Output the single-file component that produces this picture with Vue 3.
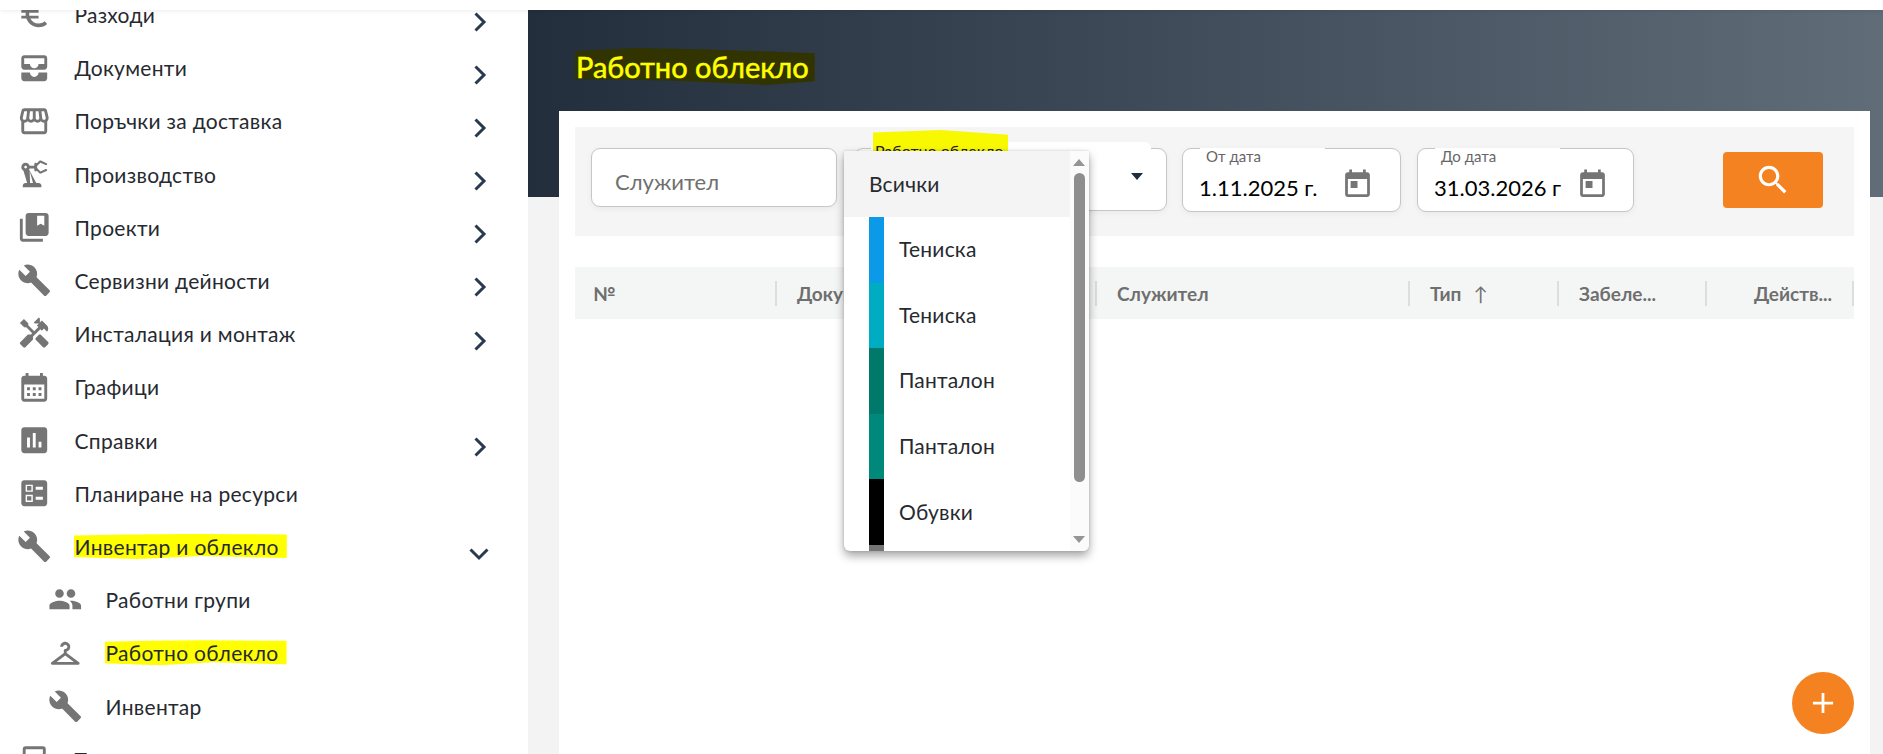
<script setup>
const paths = {
  euro: 'M15 18.5c-2.51 0-4.68-1.42-5.76-3.5H15v-2H8.58c-.05-.33-.08-.66-.08-1s.03-.67.08-1H15V9H9.24C10.32 6.92 12.5 5.5 15 5.5c1.61 0 3.09.59 4.23 1.57L21 5.3C19.41 3.87 17.3 3 15 3c-3.92 0-7.24 2.51-8.48 6H3v2h3.06c-.04.33-.06.66-.06 1 0 .34.02.67.06 1H3v2h3.52c1.24 3.49 4.56 6 8.48 6 2.31 0 4.41-.87 6-2.3l-1.78-1.77c-1.13.98-2.6 1.57-4.22 1.57z',
  inbox: 'M19 3H5c-1.1 0-2 .9-2 2v6c0 1.1.9 2 2 2h14c1.1 0 2-.9 2-2V5c0-1.1-.9-2-2-2zm0 6h-4c0 1.62-1.38 3-3 3s-3-1.38-3-3H5V5h14v4zm-4 6h6v4c0 1.1-.9 2-2 2H5c-1.1 0-2-.9-2-2v-4h6c0 1.66 1.34 3 3 3s3-1.34 3-3z',
  store: 'M21.9 8.89l-1.05-4.37c-.22-.9-1-1.52-1.91-1.52H5.05c-.9 0-1.69.63-1.9 1.52L2.1 8.89c-.24 1.02-.02 2.06.62 2.88.08.11.19.19.28.29V19c0 1.1.9 2 2 2h14c1.1 0 2-.9 2-2v-6.94c.09-.09.2-.18.28-.28.64-.82.87-1.87.62-2.89zm-2.99-3.9l1.05 4.37c.1.42.01.84-.25 1.17-.14.18-.44.47-.94.47-.61 0-1.14-.49-1.21-1.14L16.98 5l1.93-.01zM13 5h1.96l.54 4.52c.05.39-.07.78-.33 1.07-.22.26-.54.41-.95.41-.67 0-1.22-.59-1.22-1.31V5zM8.49 9.52L9.04 5H11v4.69c0 .72-.55 1.31-1.29 1.31-.34 0-.65-.15-.89-.41-.25-.29-.37-.68-.33-1.07zm-4.45-.16L5.05 5h1.97l-.58 4.86c-.08.65-.6 1.14-1.21 1.14-.49 0-.8-.29-.93-.47-.27-.32-.36-.75-.26-1.17zM5 19v-6.03c.08.01.15.03.23.03.87 0 1.66-.36 2.24-.95.6.6 1.4.95 2.31.95.87 0 1.65-.36 2.23-.93.59.57 1.39.93 2.29.93.84 0 1.64-.35 2.24-.95.58.59 1.37.95 2.24.95.08 0 .15-.02.23-.03V19H5z',
  robot: 'M19.93 8.35l-3.6 1.68L14 7.7V6.3l2.33-2.33 3.6 1.68c.38.18.82.01 1-.36.18-.38.01-.82-.36-1l-3.92-1.83c-.38-.18-.83-.1-1.13.2L13.78 4.4c-.18-.24-.46-.4-.78-.4-.55 0-1 .45-1 1v1H8.82C8.4 4.84 7.3 4 6 4 4.34 4 3 5.34 3 7c0 1.1.6 2.05 1.48 2.58L7.08 18H6c-1.1 0-2 .9-2 2v1h13v-1c0-1.1-.9-2-2-2h-1.62L8.41 8.77c.17-.24.31-.49.41-.77H12v1c0 .55.45 1 1 1 .32 0 .6-.16.78-.4l1.74 1.74c.3.3.75.38 1.13.2l3.92-1.83c.38-.18.54-.62.36-1-.18-.37-.62-.54-1-.36zM6 8c-.55 0-1-.45-1-1s.45-1 1-1 1 .45 1 1-.45 1-1 1zm5.11 10H9.08l-.25-8.45L11.11 18z',
  books: 'M4 6H2v14c0 1.1.9 2 2 2h14v-2H4V6zm16-4H8c-1.1 0-2 .9-2 2v12c0 1.1.9 2 2 2h12c1.1 0 2-.9 2-2V4c0-1.1-.9-2-2-2zm-1 9l-2.5-1.500L14 11V4h5v7z',
  build: 'M22.7 19l-9.1-9.1c.9-2.3.4-5-1.5-6.9-2-2-5-2.4-7.4-1.3L9 6 6 9 1.6 4.7C.4 7.1.9 10.1 2.9 12.1c1.9 1.9 4.6 2.4 6.9 1.5l9.1 9.1c.4.4 1 .4 1.4 0l2.3-2.3c.5-.4.5-1.1.1-1.4z',
  handy: 'M21.67 18.17l-5.3-5.3h-.99l-2.54 2.54v.99l5.3 5.3c.39.39 1.02.39 1.41 0l2.12-2.12c.39-.38.39-1.02 0-1.41zM17.34 10.19l1.41-1.41 2.12 2.12c1.17-1.17 1.17-3.07 0-4.24l-3.54-3.54-1.41 1.41V1.71l-.7-.71-3.54 3.54.71.71h2.83l-1.41 1.41 1.06 1.06-2.89 2.89-4.13-4.13V5.06L4.83 2.04 2 4.87 5.03 7.9h1.41l4.13 4.13-.85.85H7.6l-5.3 5.3c-.39.39-.39 1.02 0 1.41l2.12 2.12c.39.39 1.02.39 1.41 0l5.3-5.3v-2.12l5.15-5.15 1.06 1.05z',
  calendar: 'M19 4h-1V2h-2v2H8V2H6v2H5c-1.1 0-2 .9-2 2v14c0 1.1.9 2 2 2h14c1.1 0 2-.9 2-2V6c0-1.1-.9-2-2-2zm0 16H5V10h14v10zM9 14H7v-2h2v2zm4 0h-2v-2h2v2zm4 0h-2v-2h2v2zm-8 4H7v-2h2v2zm4 0h-2v-2h2v2zm4 0h-2v-2h2v2z',
  chart: 'M19 3H5c-1.1 0-2 .9-2 2v14c0 1.1.9 2 2 2h14c1.1 0 2-.9 2-2V5c0-1.1-.9-2-2-2zM9 17H7v-7h2v7zm4 0h-2V7h2v10zm4 0h-2v-4h2v4z',
  ballot: 'M13 9.5h5v-2h-5v2zm0 7h5v-2h-5v2zm6 4.5H5c-1.1 0-2-.9-2-2V5c0-1.1.9-2 2-2h14c1.1 0 2 .9 2 2v14c0 1.1-.9 2-2 2zM6 11h5V6H6v5zm1-4h3v3H7V7zM6 18h5v-5H6v5zm1-4h3v3H7v-3z',
  people: 'M16 11c1.66 0 2.99-1.34 2.99-3S17.66 5 16 5c-1.66 0-3 1.34-3 3s1.34 3 3 3zm-8 0c1.66 0 2.99-1.34 2.99-3S9.66 5 8 5C6.34 5 5 6.34 5 8s1.34 3 3 3zm0 2c-2.33 0-7 1.17-7 3.5V19h14v-2.5c0-2.33-4.67-3.5-7-3.5zm8 0c-.29 0-.62.02-.97.05 1.16.84 1.97 1.97 1.97 3.45V19h6v-2.5c0-2.33-4.67-3.5-7-3.5z',
  hanger: 'M21.6 18.2L13 11.75v-.91c1.65-.49 2.8-2.17 2.43-4.05-.26-1.31-1.3-2.4-2.61-2.7C10.54 3.57 8.5 5.3 8.5 7.5h2c0-.83.67-1.5 1.5-1.5s1.5.67 1.5 1.5c0 .84-.69 1.52-1.53 1.5-.54-.01-.97.45-.97.99v1.76L2.4 18.2c-.77.58-.36 1.8.6 1.8h18c.96 0 1.37-1.22.6-1.8zM6 18l6-4.5 6 4.5H6z',
  box: 'M6 3h12a2 2 0 0 1 2 2v16h-2V5H6v16H4V5a2 2 0 0 1 2-2z',
  event: 'M7 9.5h5v5H7zM16 1v2H8V1H6v2H5c-1.11 0-1.99.9-1.99 2L3 19c0 1.1.89 2 2 2h14c1.1 0 2-.9 2-2V5c0-1.1-.9-2-2-2h-1V1h-2zm3 18H5V8h14v11z',
  search: 'M15.5 14h-.79l-.28-.27C15.41 12.59 16 11.11 16 9.5 16 5.91 13.09 3 9.5 3S3 5.91 3 9.5 5.91 16 9.5 16c1.61 0 3.09-.59 4.23-1.57l.27.28v.79l5 4.99L20.49 19l-4.99-5zm-6 0C7.01 14 5 11.99 5 9.5S7.01 5 9.5 5 14 7.01 14 9.5 11.99 14 9.5 14z'
}

const menu = [
  { label: 'Разходи', icon: 'euro', arrow: 'right' },
  { label: 'Документи', icon: 'inbox', arrow: 'right' },
  { label: 'Поръчки за доставка', icon: 'store', arrow: 'right' },
  { label: 'Производство', icon: 'robot', arrow: 'right' },
  { label: 'Проекти', icon: 'books', arrow: 'right' },
  { label: 'Сервизни дейности', icon: 'build', arrow: 'right' },
  { label: 'Инсталация и монтаж', icon: 'handy', arrow: 'right' },
  { label: 'Графици', icon: 'calendar' },
  { label: 'Справки', icon: 'chart', arrow: 'right' },
  { label: 'Планиране на ресурси', icon: 'ballot' },
  { label: 'Инвентар и облекло', icon: 'build', arrow: 'down', mark: true },
  { label: 'Работни групи', icon: 'people', sub: true },
  { label: 'Работно облекло', icon: 'hanger', sub: true, mark: true },
  { label: 'Инвентар', icon: 'build', sub: true },
  { label: 'Транспорт', icon: 'box' }
]

const options = [
  { label: 'Тениска', color: '#0c9ae8' },
  { label: 'Тениска', color: '#00acc1' },
  { label: 'Панталон', color: '#00796b' },
  { label: 'Панталон', color: '#00897b' },
  { label: 'Обувки', color: '#000000' },
  { label: 'Друго', color: '#757575' }
]

const dates = [
  { label: 'От дата', value: '1.11.2025 г.' },
  { label: 'До дата', value: '31.03.2026 г' }
]

const columns = [
  { label: '№', w: 202 },
  { label: 'Документ', w: 320 },
  { label: 'Служител', w: 313 },
  { label: 'Тип', w: 149, sort: true },
  { label: 'Забеле...', w: 148 },
  { label: 'Действ...', w: 147, right: true }
]
const gridCols = columns.map(c => c.w + 'px').join(' ')
</script>

<template>
  <div class="app">
    <div class="topbar"></div>
    <div class="body">
      <aside class="sidebar">
        <ul class="menu">
          <li v-for="item in menu" :key="item.label + item.icon" class="row" :class="{ sub: item.sub }">
            <svg class="icon" viewBox="0 0 24 24"><path :d="paths[item.icon]" /></svg>
            <span class="label" :class="{ mark: item.mark }">{{ item.label }}</span>
            <svg v-if="item.arrow === 'right'" class="chev" viewBox="0 0 24 24"><path d="M8.5 3.5 17 12l-8.5 8.500" /></svg>
            <svg v-if="item.arrow === 'down'" class="chev" viewBox="0 0 24 24"><path d="M3.5 8.5 12 17l8.500-8.500" /></svg>
          </li>
        </ul>
      </aside>

      <main class="main">
        <header class="hero">
          <h1 class="title">Работно облекло</h1>
        </header>

        <section class="card">
          <div class="filters">
            <div class="field employee">Служител</div>

            <div class="field select">
              <div class="notch">
                <span class="hl"></span>
                <span class="notch-text">Работно облекло</span>
              </div>
              <span class="caret"></span>
              <div class="dropdown">
                <div class="options">
                  <div class="option all">Всички</div>
                  <div v-for="(o, i) in options" :key="i" class="option">
                    <span class="swatch" :style="{ background: o.color }"></span>
                    <span class="option-text">{{ o.label }}</span>
                  </div>
                </div>
                <div class="track">
                  <span class="arrow up"></span>
                  <span class="thumb"></span>
                  <span class="arrow dn"></span>
                </div>
              </div>
            </div>

            <div v-for="d in dates" :key="d.label" class="field date">
              <div class="date-notch">{{ d.label }}</div>
              <span class="value">{{ d.value }}</span>
              <svg class="event" viewBox="0 0 24 24"><path :d="paths.event" /></svg>
            </div>

            <button class="search" type="button">
              <svg viewBox="0 0 24 24"><path :d="paths.search" /></svg>
            </button>
          </div>

          <div class="thead" :style="{ gridTemplateColumns: gridCols }">
            <div v-for="c in columns" :key="c.label" class="th" :class="{ right: c.right }">
              <span>{{ c.label }}</span>
              <span v-if="c.sort" class="sort">↑</span>
            </div>
          </div>
        </section>

        <button class="fab" type="button">
          <svg viewBox="0 0 24 24"><path d="M10.5 1h3v9.500H23v3h-9.500V23h-3v-9.500H1v-3h9.500z" /></svg>
        </button>
      </main>
    </div>
  </div>
</template>

<style>
html, body { margin: 0; height: 100%; overflow: hidden; background: #fff; }
</style>

<style scoped>
.app {
  width: 1883px;
  height: 754px;
  display: flex;
  flex-direction: column;
  overflow: hidden;
  font-family: Lato, "Noto Sans", sans-serif;
  color: #262a30;
}
.topbar {
  height: 10px;
  flex: none;
  background: #fff;
  box-shadow: 0 1px 4px rgba(0, 0, 0, .08);
  position: relative;
  z-index: 3;
}
.body { flex: 1; display: flex; min-height: 0; }
.sidebar {
  width: 528px;
  flex: none;
  overflow: hidden;
  background: #fff;
}
.menu { list-style: none; margin: -22px 0 0; padding: 0; }
.row {
  height: 53.2px;
  display: flex;
  align-items: center;
  padding-left: 17px;
  position: relative;
}
.row.sub { padding-left: 48px; }
.icon { width: 34.500px; height: 34.500px; flex: none; fill: #757575; }
.label {
  margin-left: 23px;
  font-size: 21px;
  line-height: 25px;
  letter-spacing: .3px;
  white-space: nowrap;
}
.mark {
  background: #ffff00;
  padding: 0 8px 0 1px;
  margin-left: 22px;
  clip-path: polygon(0 6%, 25% 2%, 55% 0, 100% 2%, 100% 96%, 60% 88%, 30% 100%, 0 92%);
}
.chev {
  position: absolute;
  left: 467px;
  top: 21.500px;
  width: 24px;
  height: 24px;
  fill: none;
  stroke: #2a3a4e;
  stroke-width: 3;
}
.main {
  flex: 1;
  min-width: 0;
  display: flex;
  flex-direction: column;
  position: relative;
  background: #f3f3f3;
}
.hero {
  height: 187px;
  flex: none;
  box-sizing: border-box;
  padding: 38px 0 0 47px;
  background: linear-gradient(90deg, #222e3c, #606c78);
}
.title {
  margin: 0;
  display: inline-block;
  font-size: 29px;
  line-height: 37px;
  font-weight: 400;
  -webkit-text-stroke: .5px #ffff00;
  color: #ffff00;
  background: #313400;
  padding: 0 6px 0 1px;
  clip-path: polygon(0 8%, 25% 0, 55% 4%, 100% 14%, 100% 90%, 80% 100%, 40% 88%, 0 84%);
}
.card {
  flex: 1;
  margin: -86px 13px 0 31px;
  padding: 16px;
  background: #fff;
  position: relative;
}
.filters {
  height: 109px;
  box-sizing: border-box;
  padding: 21px 0 0 16px;
  display: flex;
  align-items: flex-start;
  background: #f5f5f5;
}
.field {
  position: relative;
  box-sizing: border-box;
  background: #fff;
  border: 1px solid #c6c6c6;
  border-radius: 9px;
  box-shadow: 0 2px 6px rgba(0, 0, 0, .05);
}
.employee {
  width: 246px;
  height: 59px;
  margin-right: 17px;
  padding: 20px 0 0 23px;
  font-size: 22px;
  line-height: 26px;
  color: #6f6f6f;
}
.select { width: 313px; height: 63px; margin-right: 15px; }
.notch {
  position: absolute;
  left: 16px;
  top: -7px;
  width: 280px;
  height: 24px;
  background: #fff;
  border-radius: 6px;
}
.hl {
  position: absolute;
  left: 2px;
  top: -12px;
  width: 135px;
  height: 26px;
  background: #f8f800;
  clip-path: polygon(0 10%, 50% 0, 100% 18%, 100% 100%, 60% 100%, 0 94%);
}
.notch-text {
  position: absolute;
  left: 4px;
  top: 0;
  font-size: 16px;
  line-height: 18px;
  color: #222;
  white-space: nowrap;
}
.caret {
  position: absolute;
  left: 276px;
  top: 24px;
  width: 0;
  height: 0;
  border-left: 6.500px solid transparent;
  border-right: 6.500px solid transparent;
  border-top: 7px solid #1f2d3d;
}
.dropdown {
  position: absolute;
  left: -11px;
  top: 2px;
  width: 245px;
  height: 400px;
  display: flex;
  overflow: hidden;
  background: #fff;
  border-radius: 0 0 6px 6px;
  box-shadow: 0 5px 10px rgba(0, 0, 0, .35), 0 0 3px rgba(0, 0, 0, .15);
  z-index: 2;
}
.options { flex: 1; min-width: 0; }
.option {
  height: 65.6px;
  display: flex;
  align-items: center;
  padding-left: 25px;
  font-size: 21px;
  letter-spacing: .2px;
}
.option.all { background: #f4f4f4; height: 66px; padding-bottom: 2px; box-sizing: border-box; }
.option-text { margin-top: -2px; }
.swatch { width: 15px; height: 100%; margin-right: 15px; flex: none; }
.track {
  width: 19px;
  flex: none;
  background: #fbfbfb;
  position: relative;
  display: flex;
  flex-direction: column;
  align-items: center;
}
.thumb {
  position: absolute;
  left: 4px;
  top: 22px;
  width: 11px;
  height: 309px;
  border-radius: 6px;
  background: #8e8e8e;
}
.arrow {
  position: absolute;
  left: 3px;
  width: 0;
  height: 0;
  border-left: 6.500px solid transparent;
  border-right: 6.500px solid transparent;
}
.arrow.up { top: 8px; border-bottom: 7px solid #959595; }
.arrow.dn { top: 385px; border-top: 7px solid #959595; }
.date { height: 64px; }
.date:nth-of-type(3) { width: 219px; margin-right: 16px; }
.date:nth-of-type(4) { width: 217px; }
.date-notch {
  position: absolute;
  left: 17px;
  top: -1px;
  width: 125px;
  height: 23px;
  padding-left: 6px;
  box-sizing: border-box;
  background: #fff;
  border-radius: 0 0 6px 6px;
  font-size: 15px;
  line-height: 16px;
  color: #666;
}
.value {
  position: absolute;
  left: 16px;
  top: 26px;
  font-size: 22px;
  line-height: 26px;
  color: #000;
  white-space: nowrap;
}
.event { position: absolute; left: 158px; top: 19px; width: 33px; height: 33px; fill: #757575; }
.search {
  margin: 4px 0 0 89px;
  width: 100px;
  height: 56px;
  border: 0;
  border-radius: 4px;
  background: #f58220;
  display: flex;
  align-items: center;
  justify-content: center;
  padding: 0;
}
.search svg { width: 38px; height: 38px; fill: #fff; }
.thead {
  margin-top: 31px;
  height: 52px;
  display: grid;
  align-items: center;
  background: #f4f6f5;
}
.th {
  height: 25px;
  display: flex;
  align-items: center;
  box-sizing: border-box;
  padding-left: 20px;
  border-right: 2px solid #dcdedd;
  font-size: 19px;
  font-weight: 700;
  color: #6f6f6f;
  white-space: nowrap;
}
.th:first-child { padding-left: 18px; }
.th.right { justify-content: flex-end; padding-right: 20px; }
.sort { margin-left: 12px; font-weight: 400; }
.fab {
  position: absolute;
  left: 1264px;
  top: 662px;
  width: 62px;
  height: 62px;
  padding: 0;
  border: 0;
  border-radius: 50%;
  background: #f58220;
  display: flex;
  align-items: center;
  justify-content: center;
}
.fab svg { width: 22px; height: 22px; fill: #fff; }
</style>
